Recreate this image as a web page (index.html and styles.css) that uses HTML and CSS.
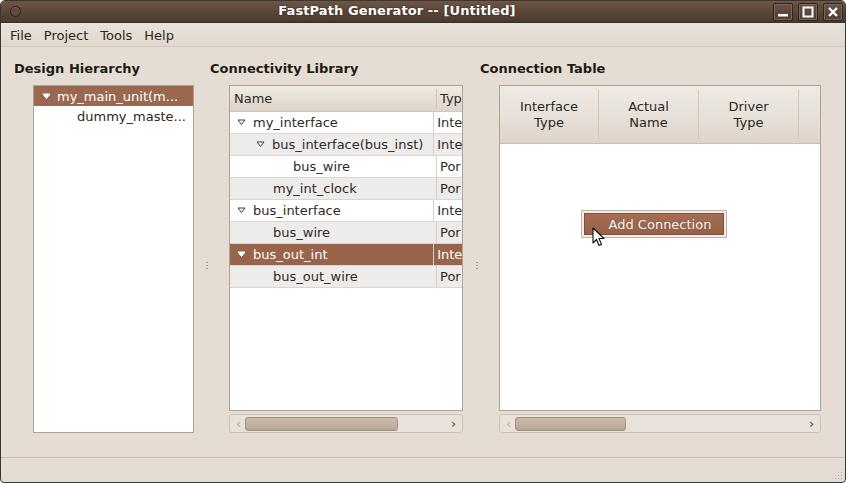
FILE: index.html
```html
<!DOCTYPE html>
<html>
<head>
<meta charset="utf-8">
<link rel="stylesheet" href="styles.css">
</head>
<body>
<div class="window">
  <div class="titlebar">
    <span class="title-dot"></span>
    <span class="title">FastPath Generator -- [Untitled]</span>
    <div class="wbtns">
      <span class="wbtn"><svg width="12" height="12" viewBox="0 0 12 12"><rect x="1" y="8" width="10" height="2.5" fill="#fff"/></svg></span>
      <span class="wbtn"><svg width="12" height="12" viewBox="0 0 12 12"><rect x="1.5" y="1.5" width="9" height="9" fill="none" stroke="#fff" stroke-width="2"/></svg></span>
      <span class="wbtn"><svg width="12" height="12" viewBox="0 0 12 12"><path d="M2 2 L10 10 M10 2 L2 10" stroke="#fff" stroke-width="2.4"/></svg></span>
    </div>
  </div>
  <div class="menubar">
    <span class="menu">File</span>
    <span class="menu">Project</span>
    <span class="menu">Tools</span>
    <span class="menu">Help</span>
  </div>
  <div class="main">
    <div class="pane pane-left">
      <div class="label">Design Hierarchy</div>
      <div class="box hier">
        <div class="hrow sel"><svg class="exp" width="9" height="9" viewBox="0 0 9 9"><polygon points="1,2 8,2 4.5,6.5" fill="#fff" stroke="#fff"/></svg><span>my_main_unit(m...</span></div>
        <div class="hrow child"><span>dummy_maste...</span></div>
      </div>
    </div>
    <div class="handle"><span class="grip-dots"></span></div>
    <div class="pane pane-mid">
      <div class="label">Connectivity Library</div>
      <div class="box tree">
        <div class="thead"><div class="c1">Name</div><div class="c2">Typ</div></div>
        <div class="trow"><div class="c1 l0"><svg class="exp" width="9" height="9" viewBox="0 0 9 9"><polygon points="1,2 8,2 4.5,6.5" fill="#fff" stroke="#3c3c3c"/></svg>my_interface</div><div class="c2">Inte</div></div>
        <div class="trow alt"><div class="c1 l1"><svg class="exp" width="9" height="9" viewBox="0 0 9 9"><polygon points="1,2 8,2 4.5,6.5" fill="#fff" stroke="#3c3c3c"/></svg>bus_interface(bus_inst)</div><div class="c2">Inte</div></div>
        <div class="trow"><div class="c1 l2">bus_wire</div><div class="c2">Por</div></div>
        <div class="trow alt"><div class="c1 l1n">my_int_clock</div><div class="c2">Por</div></div>
        <div class="trow"><div class="c1 l0"><svg class="exp" width="9" height="9" viewBox="0 0 9 9"><polygon points="1,2 8,2 4.5,6.5" fill="#fff" stroke="#3c3c3c"/></svg>bus_interface</div><div class="c2">Inte</div></div>
        <div class="trow alt"><div class="c1 l1n">bus_wire</div><div class="c2">Por</div></div>
        <div class="trow sel"><div class="c1 l0"><svg class="exp" width="9" height="9" viewBox="0 0 9 9"><polygon points="1,2 8,2 4.5,6.5" fill="#fff" stroke="#fff"/></svg>bus_out_int</div><div class="c2">Inte</div></div>
        <div class="trow alt"><div class="c1 l1n">bus_out_wire</div><div class="c2">Por</div></div>
      </div>
      <div class="hscroll">
        <span class="arr">‹</span>
        <span class="thumb thumb-mid"></span>
        <span class="fill"></span>
        <span class="arr dark">›</span>
      </div>
    </div>
    <div class="handle"><span class="grip-dots"></span></div>
    <div class="pane pane-right">
      <div class="label">Connection Table</div>
      <div class="box ctable">
        <div class="chead">
          <div class="ch">Interface<br>Type</div>
          <div class="ch">Actual<br>Name</div>
          <div class="ch">Driver<br>Type</div>
          <div class="ch last"></div>
        </div>
        <div class="cbody">
          <div class="btn-wrap"><button class="btn">Add Connection</button>
            <svg class="cursor" width="13" height="20" viewBox="0 0 13 20"><path d="M1 1 L1 16 L4.5 12.5 L7 18.5 L9.5 17.5 L7 11.5 L12 11.5 Z" fill="#fff" stroke="#111" stroke-width="1.1" stroke-linejoin="round"/></svg>
          </div>
        </div>
      </div>
      <div class="hscroll">
        <span class="arr">‹</span>
        <span class="thumb thumb-right"></span>
        <span class="fill"></span>
        <span class="arr dark">›</span>
      </div>
    </div>
  </div>
  <div class="statusbar"><span class="grip"></span></div>
</div>
</body>
</html>
```
FILE: styles.css
```css
* { box-sizing: border-box; }
html, body { margin: 0; padding: 0; background: #ffffff; }
body { font-family: "DejaVu Sans", "Liberation Sans", sans-serif; font-size: 13px; color: #2e2a26; }
.window {
  width: 846px; height: 483px;
  background: #e5ddd3;
  border: 1px solid #3a3632;
  border-radius: 5px 5px 4px 4px;
  overflow: hidden;
  display: flex; flex-direction: column;
  position: relative;
}
.titlebar {
  height: 22px; flex: none;
  background: linear-gradient(#6e5647, #5a4638 50%, #4b3a2f);
  display: flex; align-items: center; justify-content: center;
  position: relative;
  border-bottom: 1px solid #3a2e26;
  padding-right: 52px; padding-bottom: 2px;
}
.title { color: #fff; font-weight: bold; font-size: 13px; text-shadow: 0 0 2px #2a1e18; letter-spacing: 0.1px; }
.title-dot {
  position: absolute; left: 9px; top: 5px;
  width: 11px; height: 11px; border-radius: 50%;
  border: 1px solid #2c221c; background: #5e4a3e;
  box-shadow: inset 0 1px 0 #7a6456;
}
.wbtns { position: absolute; right: 2px; top: 2px; display: flex; gap: 5px; }
.wbtn {
  width: 20px; height: 18px; border: 1px solid #2e241e; border-radius: 2px;
  background: linear-gradient(#6a5345, #4e3d32);
  box-shadow: inset 0 0 0 1px #7c6658;
  display: flex; align-items: center; justify-content: center;
}
.menubar {
  height: 24px; flex: none;
  background: linear-gradient(#e9e2da, #e0d8cf);
  border-bottom: 1px solid #d3c9bf;
  display: flex; align-items: center; padding-left: 9px;
}
.menu { margin-right: 12px; font-size: 13px; color: #2c2620; padding-top: 1px; }
.main { flex: none; height: 410px; display: flex; padding-top: 12px; }
.pane { display: flex; flex-direction: column; }
.label { font-weight: bold; font-size: 13px; height: 20px; line-height: 20px; color: #1e1a16; margin-bottom: 6px; }
.pane-left { width: 203px; padding-left: 13px; }
.pane-mid { width: 264px; padding-left: 0; }
.pane-right { flex: 1; padding-left: 0; }
.handle { width: 6px; display: flex; align-items: center; justify-content: center; padding-top: 16px; }
.grip-dots { width: 2px; height: 9px; background: repeating-linear-gradient(#a89b8f 0 1px, transparent 1px 3px); }
.box { background: #fff; border: 1px solid #b2a293; }
.hier { margin-left: 19px; width: 161px; height: 348px; }
.hrow { height: 20px; display: flex; align-items: center; font-size: 13px; }
.hrow.sel { background: #9a6850; color: #fff; padding-left: 8px; }
.hrow.sel .exp { margin-right: 6px; }
.hrow.child { padding-left: 43px; color: #2c2620; }
.tree { margin-left: 19px; width: 234px; height: 326px; overflow: hidden; }
.thead { height: 26px; display: flex; background: linear-gradient(#f0ebe6, #e6dfd7 50%, #ddd4cb); border-bottom: 1px solid #d0c6bb; }
.thead .c1 { width: 207px; padding-left: 4px; display: flex; align-items: center; border-right: 1px solid #cfc4b8; margin: 3px 0; }
.thead .c2 { padding-left: 3px; display: flex; align-items: center; }
.trow { height: 22px; display: flex; border-bottom: 1px solid #dcd6d0; }
.trow.alt { background: #edecea; }
.trow.sel { background: #98644c; color: #fff; }
.trow .c1 { width: 207px; display: flex; align-items: center; border-right: 1px solid #d6d0ca; white-space: nowrap; }
.trow .c2 { padding-left: 3px; display: flex; align-items: center; white-space: nowrap; overflow: hidden; }
.exp { flex: none; margin-right: 7px; }
.l0 { padding-left: 7px; }
.l1 { padding-left: 26px; }
.l1n { padding-left: 43px; }
.l2 { padding-left: 63px; }
.hscroll {
  height: 19px; margin-top: 3px;
  background: #e9e2db; border: 1px solid #cdc1b6; border-radius: 3px;
  display: flex; align-items: center; padding: 0 2px;
}
.pane-mid .hscroll { margin-left: 19px; width: 234px; }
.pane-right .hscroll { margin-left: 19px; width: 322px; }
.arr { width: 13px; text-align: center; color: #b6aba0; font-size: 13px; line-height: 13px; }
.arr.dark { color: #4a423b; }
.thumb { height: 14px; border: 1px solid #a29282; border-radius: 3px; background: linear-gradient(#c9b9ab, #c2b1a2 60%, #b5a393); }
.thumb-mid { width: 153px; }
.thumb-right { width: 111px; }
.fill { flex: 1; }
.ctable { margin-left: 19px; width: 322px; height: 326px; display: flex; flex-direction: column; }
.chead { height: 58px; display: flex; background: linear-gradient(#efe9e4 0%, #e8e1da 50%, #ddd4cb 100%); border-bottom: 1px solid #c9beb3; flex: none; }
.ch { width: 100px; display: flex; align-items: center; justify-content: center; text-align: center; line-height: 16px; border-right: 1px solid #d2c6ba; margin: 4px 0; font-size: 13px; color: #2c2620; }
.ch:first-child { width: 99px; }
.ch.last { flex: 1; border-right: none; }
.cbody { flex: 1; display: flex; justify-content: flex-start; padding-top: 66px; padding-left: 81px; }
.btn-wrap { position: relative; height: 28px; }
.btn {
  font-family: inherit; font-size: 13px; color: #fff;
  width: 146px; height: 28px;
  border: 1px solid #bfb2a6; border-radius: 1px;
  background-color: #f1ece6;
  background-clip: padding-box;
  box-shadow: inset 0 0 0 2px #f2ede8, inset 0 0 0 3px #7e5240;
  background-image: linear-gradient(#a86f55, #975f46);
  padding: 0 0 0 12px;
  text-shadow: 0 0 1px #5a3424;
}
.cursor { position: absolute; left: 11px; top: 17px; }
.statusbar { flex: 1; border-top: 1px solid #c9bdb2; position: relative; }
.grip {
  position: absolute; right: 2px; bottom: 2px; width: 12px; height: 12px;
  background-image: radial-gradient(circle, #b0a498 0.8px, transparent 1px);
  background-size: 3px 3px;
  clip-path: polygon(100% 0, 100% 100%, 0 100%);
}
```
